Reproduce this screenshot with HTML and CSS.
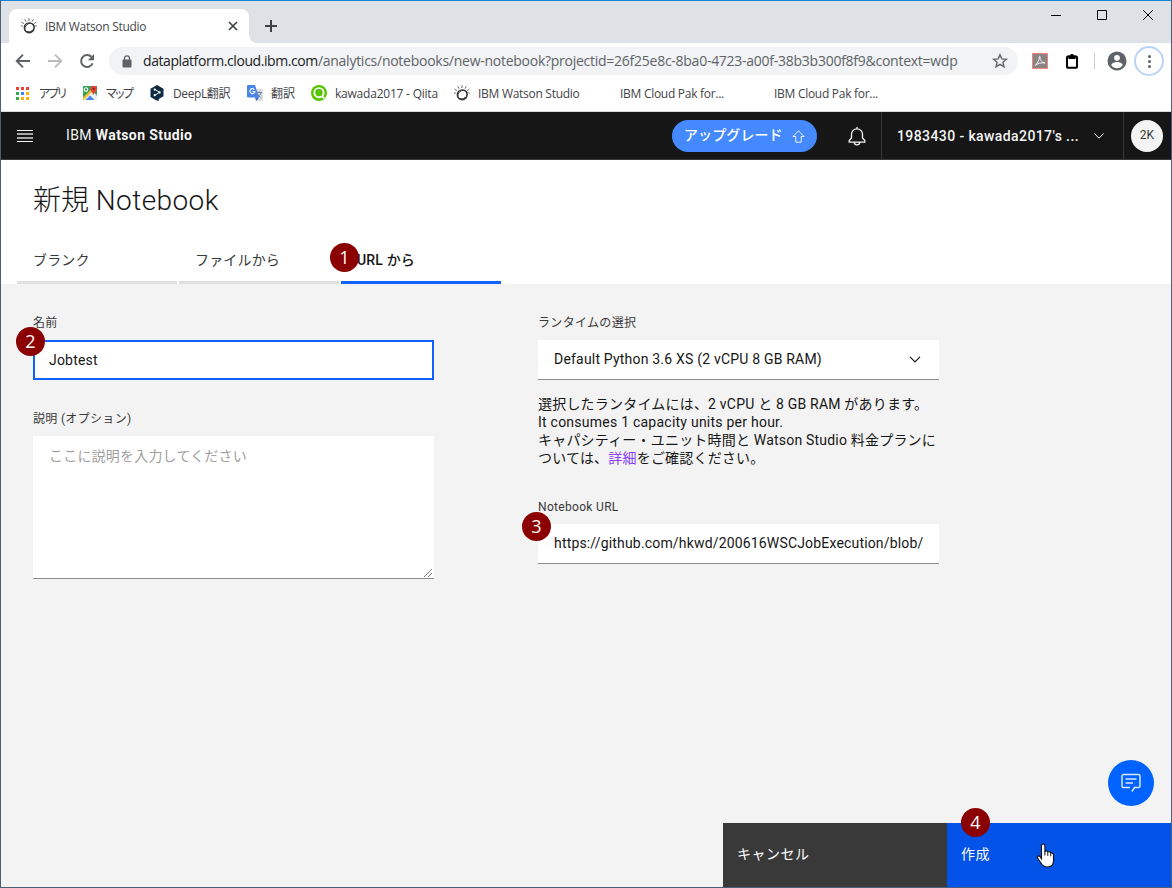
FILE: index.html
```html
<!DOCTYPE html>
<html lang="ja">
<head>
<meta charset="utf-8">
<title>IBM Watson Studio</title>
<link rel="stylesheet" href="styles.css">
</head>
<body>
<svg class="defs" width="0" height="0">
  <symbol id="watson" viewBox="0 0 16 16">
    <g fill="none" stroke="#333" stroke-linecap="round">
      <circle cx="8.2" cy="9.8" r="5" stroke-width="1.2"/>
      <ellipse cx="8.6" cy="9.6" rx="5" ry="4" transform="rotate(-40 8.6 9.6)" stroke-width=".9"/>
      <path d="M5 13.6q4 2 6.8-1" stroke-width="1"/>
      <path d="M8 .7v1.800M3.900 1.700l.9 1.600M12.100 1.700l-.9 1.600M1 4.400l1.600 1M15 4.400l-1.600 1M.4 8h1M15.400 8h-.8" stroke-width="1" stroke="#666"/>
    </g>
  </symbol>
</svg>
<div class="window">
  <div class="tabstrip">
    <div class="tab">
      <svg class="favicon" width="16" height="16"><use href="#watson"/></svg>
      <span class="tab-title">IBM Watson Studio</span>
      <svg class="tab-close" width="10" height="10" viewBox="0 0 10 10"><path d="M1 1l8 8M9 1l-8 8" stroke="#3c4043" stroke-width="1.6"/></svg>
    </div>
    <svg class="tab-foot" width="8" height="8" viewBox="0 0 8 8"><path d="M0 0a8 8 0 0 0 8 8H0z" fill="#fff"/></svg>
    <svg class="new-tab" width="14" height="14" viewBox="0 0 14 14"><path d="M7 1v12M1 7h12" stroke="#3c4043" stroke-width="2"/></svg>
    <div class="window-controls">
      <svg width="12" height="12" viewBox="0 0 12 12"><path d="M1 6.5h10" stroke="#000"/></svg>
      <svg width="12" height="12" viewBox="0 0 12 12"><path d="M1.5 1.5h9v9h-9z" fill="none" stroke="#000"/></svg>
      <svg width="12" height="12" viewBox="0 0 12 12"><path d="M1 1l10 10M11 1L1 11" stroke="#000"/></svg>
    </div>
  </div>

  <div class="toolbar">
    <svg class="nav" width="16" height="16" viewBox="0 0 16 16"><path d="M15 8H2M8 1.7L1.7 8 8 14.3" fill="none" stroke="#5f6368" stroke-width="1.9"/></svg>
    <svg class="nav" width="16" height="16" viewBox="0 0 16 16"><path d="M1 8h13M8 1.7L14.3 8 8 14.3" fill="none" stroke="#babcbe" stroke-width="1.9"/></svg>
    <svg class="nav" width="16" height="16" viewBox="0 0 16 16"><path d="M13.6 10.4A6 6 0 1 1 12.4 3.8" fill="none" stroke="#5f6368" stroke-width="2"/><path d="M15 1v6.2H8.8z" fill="#5f6368"/></svg>
    <div class="omnibox">
      <svg width="10" height="13" viewBox="0 0 10 13"><rect x=".5" y="4.5" width="9" height="8" rx="1" fill="#5f6368"/><path d="M2.500 5V3.300a2.500 2.500 0 0 1 5 0V5" fill="none" stroke="#5f6368" stroke-width="1.300"/></svg>
      <span class="url"><b>dataplatform.cloud.ibm.com</b>/analytics/notebooks/new-notebook?projectid=26f25e8c-8ba0-4723-a00f-38b3b300f8f9&amp;context=wdp</span>
      <svg class="star" width="16" height="16" viewBox="0 0 16 16"><path d="M8 1.700l1.800 4.200 4.600.4-3.500 3 1.100 4.500L8 11.400l-4 2.400 1.100-4.500-3.500-3 4.600-.4z" fill="none" stroke="#5f6368" stroke-width="1.400"/></svg>
    </div>
    <svg class="ext-pdf" width="16" height="16" viewBox="0 0 16 16"><rect x=".5" y=".5" width="15" height="15" fill="#8b8486" stroke="#ef8777"/><path d="M3.200 12.400C5.300 10.800 7 7.800 7.300 4c0-1.200 1.200-1 .8.600C7.700 7 10.200 9.600 13 10M3.200 12.400c2.400-1.900 6-3.100 9.800-2.400" fill="none" stroke="#f6f2f2" stroke-width="1"/></svg>
    <svg class="ext-clip" width="14" height="16" viewBox="0 0 14 16"><rect x="2" y="3.500" width="10" height="11.300" rx=".8" fill="none" stroke="#000" stroke-width="2"/><path d="M3.500 2.500h1.600a2 2 0 0 1 3.800 0h1.600V6h-7z"/></svg>
    <span class="separator"></span>
    <svg class="avatar" width="20" height="20" viewBox="0 0 20 20"><circle cx="10" cy="10" r="9.500" fill="#5f6368"/><circle cx="10" cy="6.800" r="2.900" fill="#fff"/><path d="M4.300 14.300c0-2.200 3.800-3.300 5.700-3.300s5.700 1.100 5.700 3.300a7 7 0 0 1-11.400 0z" fill="#fff"/></svg>
    <span class="kebab"><i></i><i></i><i></i></span>
  </div>

  <div class="bookmarks">
    <span class="bm bm-apps"><span class="apps-grid"><i class="r"></i><i class="r"></i><i class="r"></i><i class="g"></i><i class="b"></i><i class="y"></i><i class="g"></i><i class="y"></i><i class="y"></i></span><em>アプリ</em></span>
    <span class="bm bm-maps">
      <svg width="16" height="16" viewBox="0 0 16 16"><path d="M1 1h14v14H1z" fill="#34a058"/><path d="M1 15L10.500 6 15 10.500V15z" fill="#eceff1"/><path d="M3.500 15L8 10.500l4.500 4.500z" fill="#4285f4"/><path d="M1 12.500l9.500-9.300 1.500 1.500L2 15H1z" fill="#fbc02d"/><circle cx="4" cy="4.600" r="1.800" fill="none" stroke="#fff" stroke-width="1.100"/><path d="M11.500 10.500c-.2-2.600-3-3.600-3-6.700a3.100 3.100 0 0 1 6.200 0c0 3.100-3 4.100-3.200 6.700z" fill="#ea4335"/><circle cx="11.600" cy="3.800" r="1.100" fill="#8b1a10"/></svg><em>マップ</em></span>
    <span class="bm bm-deepl">
      <svg width="14" height="16" viewBox="0 0 14 16"><path d="M7 0l6.500 3.700v7.500L8.800 14v2L6 15.200.5 12V3.700z" fill="#0f2b46"/><path d="M5 4.500L9.500 7.300 5 10.200" fill="none" stroke="#fff" stroke-width=".9"/><circle cx="4.700" cy="4.600" r="1.100" fill="#fff"/><circle cx="9.600" cy="7.400" r="1.100" fill="#fff"/><circle cx="4.700" cy="10.200" r="1.100" fill="#fff"/></svg><em>DeepL翻訳</em></span>
    <span class="bm bm-trans">
      <svg width="16" height="16" viewBox="0 0 16 16"><path d="M6 4h9a1 1 0 0 1 1 1v10a1 1 0 0 1-1 1H9z" fill="#dcdcdc"/><path d="M9.500 7.500H15M12.200 6.500v1M14 7.500c-.6 2.300-2 3.800-4 5M10.600 9c.8 1.700 2 2.800 3.600 3.600" stroke="#607d8b" fill="none" stroke-width=".9"/><path d="M1 0h7l4 12.500H1a1 1 0 0 1-1-1V1a1 1 0 0 1 1-1z" fill="#4a86e8"/><path d="M8 12.500h4L9.200 16z" fill="#3367d6"/><path d="M7.300 4.500a2.500 2.500 0 1 0 .6 2H5.600" fill="none" stroke="#fff" stroke-width="1.100"/></svg><em>翻訳</em></span>
    <span class="bm bm-qiita">
      <svg width="16" height="16" viewBox="0 0 16 16"><circle cx="8" cy="8" r="8" fill="#55c500"/><circle cx="8" cy="7.700" r="4.600" fill="none" stroke="#fff" stroke-width="1.900"/><ellipse cx="7.800" cy="6.700" rx="3.300" ry="2.600" fill="#55c500"/><path d="M11 11.500l2.300 1.800" stroke="#fff" stroke-width="1.900"/></svg><em>kawada2017 - Qiita</em></span>
    <span class="bm bm-watson"><svg width="16" height="16"><use href="#watson"/></svg><em>IBM Watson Studio</em></span>
    <span class="bm bm-cloud1"><em>IBM Cloud Pak for...</em></span>
    <span class="bm bm-cloud2"><em>IBM Cloud Pak for...</em></span>
  </div>

  <header class="app-header">
    <svg class="menu" width="16" height="12" viewBox="0 0 16 12"><path d="M0 .5h16M0 11.500h16" stroke="#f4f4f4"/><path d="M0 4h16M0 8h16" stroke="#a8a8a8" stroke-width="2"/></svg>
    <span class="brand">IBM <b>Watson Studio</b></span>
    <button class="upgrade"><span>アップグレード</span><svg width="13" height="13" viewBox="0 0 13 13"><path d="M6.500.8L12 6.500H9.200v5.700H3.800V6.500H1z" fill="none" stroke="#fff" stroke-width=".9"/></svg></button>
    <svg class="bell" width="18" height="20" viewBox="0 0 18 20"><path d="M9 1v1.800M3.500 8.300a5.500 5.500 0 0 1 11 0V12l2.300 2.500v1.700H1.200v-1.700L3.500 12zM6.300 16.500a2.700 2.300 0 0 0 5.400 0" fill="none" stroke="#f4f4f4" stroke-width="1.300"/></svg>
    <div class="account"><span>1983430 - kawada2017's ...</span><svg width="10" height="6" viewBox="0 0 10 6"><path d="M.4.500L5 5.200 9.600.5" fill="none" stroke="#f4f4f4"/></svg></div>
    <div class="user"><span>2K</span></div>
  </header>

  <section class="page-head">
    <h1>新規 <span>Notebook</span></h1>
    <nav class="tabs">
      <a>ブランク</a>
      <a>ファイルから</a>
      <a class="active"><span>URL から</span><span class="step step-1">1</span></a>
    </nav>
  </section>

  <main class="content">
    <div class="form">
      <div class="column">
        <label>名前</label>
        <div class="field focused"><span class="value t-name">Jobtest</span><span class="step step-2">2</span></div>
        <label class="label-desc">説明 (オプション)</label>
        <div class="textarea">ここに説明を入力してください
          <svg class="grip" width="10" height="10" viewBox="0 0 10 10"><path d="M1 9L9 1M5 9l4-4" stroke="#555" stroke-dasharray="1.100 .4"/></svg>
        </div>
      </div>
      <div class="column">
        <label>ランタイムの選択</label>
        <div class="field"><span class="value">Default Python 3.6 XS (2 vCPU 8 GB RAM)</span><svg class="chevron" width="12" height="7" viewBox="0 0 12 7"><path d="M1 .8l5 5 5-5" fill="none" stroke="#161616" stroke-width="1.200"/></svg></div>
        <p class="help"><span class="l1">選択したランタイムには、2 vCPU と 8 GB RAM があります。</span><span class="en">It consumes 1 capacity units per hour.</span><span>キャパシティー・ユニット時間と Watson Studio 料金プランに</span><span>ついては、<a>詳細</a>をご確認ください。</span></p>
        <label class="label-url">Notebook URL</label>
        <div class="field"><span class="value t-url">https://github.com/hkwd/200616WSCJobExecution/blob/</span><span class="step step-3">3</span></div>
      </div>
    </div>
    <div class="chat"><svg width="20" height="20" viewBox="0 0 20 20"><path d="M9 14.500H2.500A1.500 1.500 0 0 1 1 13V3a1.500 1.500 0 0 1 1.500-1.500h15A1.500 1.500 0 0 1 19 3v10a1.500 1.500 0 0 1-1.500 1.500h-4l-2.600 4M4.500 6h11M4.500 10H12" fill="none" stroke="#d9e7ff" stroke-width="1.500"/></svg></div>
    <footer class="actions">
      <button class="cancel">キャンセル</button>
      <button class="create">作成<span class="step step-4">4</span>
        <svg class="cursor" width="19" height="26" viewBox="0 0 19 26"><path d="M5.500 15.800V2.700a1.700 1.700 0 0 1 3.400 0v5.800c.8-.8 2.500-.6 2.900.6 1-.7 2.500-.3 2.900.9 1.400-.4 2.800.4 2.800 2v5.500c0 4-2 6.500-6 6.500-3.500 0-5-1.300-6.500-4L1.500 15c-.8-1.800 1.400-2.800 2.500-1.300z" fill="#fff" stroke="#111" stroke-width="1.100"/><path d="M8.900 8.500v4M11.800 9.300v3.500M14.700 10.300v3" stroke="#111"/></svg>
      </button>
    </footer>
  </main>
</div>
</body>
</html>
```
FILE: styles.css
```css
* { box-sizing: border-box; }
body { margin: 0; font-family: Roboto, "Noto Sans CJK JP", sans-serif; color: #161616; white-space: nowrap; }
svg { display: block; flex: none; }
button { border: 0; padding: 0; font: inherit; color: #fff; text-align: left; }
.defs { position: absolute; }

.window { width: 1172px; height: 888px; display: flex; flex-direction: column; border: 1px solid #4a6076; border-top-color: #1883d7; background: #fff; overflow: hidden; }

/* browser chrome */
.tabstrip { height: 42px; flex: none; display: flex; background: #dee1e6; padding: 8px 0 0 8px; }
.tab { width: 240px; height: 34px; display: flex; align-items: center; background: #fff; border-radius: 8px 8px 0 0; padding: 0 11px 0 12px; font: 12px "Open Sans", sans-serif; color: #45494d; }
.tab-title { margin-left: 8px; letter-spacing: -.3px; }
.tab-close { margin-left: auto; }
.tab-foot { align-self: flex-end; }
.new-tab { margin: 10px 0 0 7px; }
.window-controls { margin-left: auto; margin-right: 17px; display: flex; gap: 34px; }
.toolbar { height: 37px; flex: none; display: flex; align-items: center; padding: 0 0 1px 14px; }
.nav { margin-right: 16px; }
.omnibox { width: 909px; height: 28px; margin-left: -2px; border-radius: 14px; background: #f1f3f4; display: flex; align-items: center; padding: 0 10px 0 13px; }
.url { margin-left: 11px; font: 14px/20px "Open Sans", sans-serif; color: #5f6368; letter-spacing: -.26px; }
.url b { font-weight: 400; color: #202124; letter-spacing: -.42px; }
.star { margin-left: auto; }
.ext-pdf { margin-left: 14px; }
.ext-clip { margin-left: 17px; }
.separator { width: 1px; height: 16px; margin-left: 15px; background: #c8cacd; }
.avatar { margin-left: 12px; }
.kebab { width: 30px; height: 30px; margin-left: 7px; border: 2px solid #bad3f8; border-radius: 50%; display: flex; flex-direction: column; align-items: center; justify-content: center; gap: 2px; }
.kebab i { width: 3px; height: 3px; border-radius: 50%; background: #5f6368; }
.bookmarks { height: 32px; flex: none; display: flex; padding: 0 0 5px 14px; border-bottom: 1px solid #d9dbdd; font: 12px "Open Sans", "Noto Sans CJK JP", sans-serif; color: #3f4347; }
.bm { display: flex; align-items: center; flex: none; gap: 8px; letter-spacing: -.28px; }
.bm em { font-style: normal; line-height: 18px; padding-top: 2px; }
.bm-apps { width: 67px; gap: 10px; }
.bm-apps em, .bm-maps em { font-feature-settings: "palt"; letter-spacing: -2px; }
.apps-grid { width: 13px; display: grid; grid-template-columns: repeat(3, 3px); gap: 2px; margin-left: 1px; }
.apps-grid i { height: 3px; }
.r { background: #ea4335; } .g { background: #34a853; } .b { background: #4285f4; } .y { background: #fbb105; }
.bm-maps { width: 68px; }
.bm-maps em { letter-spacing: -1.6px; }
.bm-deepl { width: 97px; gap: 9px; letter-spacing: -.4px; }
.bm-trans { width: 64px; letter-spacing: 0; }
.bm-qiita { width: 143px; letter-spacing: -.22px; }
.bm-watson { width: 166px; }
.bm-cloud1 { width: 154px; }

/* application header */
.app-header { height: 48px; flex: none; display: flex; align-items: center; background: #161616; border-bottom: 1px solid #393939; color: #f4f4f4; font-size: 14px; }
.menu { margin-left: 16px; }
.brand { margin-left: 33px; letter-spacing: .4px; padding-bottom: 1px; }
.brand b { font-weight: 700; }
.upgrade { width: 145px; height: 32px; margin-left: auto; border-radius: 16px; background: #4589ff; display: flex; align-items: center; padding: 0 12px 4px 12px; font-weight: 500; }
.upgrade span { letter-spacing: .1px; }
.upgrade svg { margin: 5px 0 0 auto; }
.bell { margin: 0 15px 0 31px; }
.account { width: 243px; height: 47px; border-left: 1px solid #393939; border-right: 1px solid #393939; display: flex; align-items: center; justify-content: space-between; padding: 0 19px 0 15px; font-weight: 500; letter-spacing: .4px; }
.user { width: 32px; height: 32px; margin: 0 8px 0 7px; border-radius: 50%; background: #f4f4f4; color: #393939; display: flex; justify-content: center; line-height: 31px; font-size: 12px; }

/* title and tabs */
.page-head { height: 124px; flex: none; padding-left: 16px; display: flex; flex-direction: column; justify-content: space-between; }
h1 { margin: 23px 0 0 16px; font-weight: 300; font-size: 28px; line-height: 36px; }
h1 span { letter-spacing: .4px; }
.tabs { display: flex; gap: 2px; }
.tabs a { width: 160px; height: 48px; border-bottom: 3px solid #e0e0e0; padding-left: 16px; font-size: 14px; line-height: 48px; letter-spacing: .16px; color: #393939; position: relative; }
.tabs .active { border-color: #0f62fe; font-weight: 500; color: #161616; }

/* form */
.content { flex: 1; background: #f3f3f3; display: flex; flex-direction: column; position: relative; }
.form { display: grid; grid-template-columns: 401px 401px; gap: 104px; padding: 31px 0 0 32px; }
.column { display: flex; flex-direction: column; }
label { font-size: 12px; line-height: 16px; letter-spacing: .32px; color: #393939; margin-bottom: 9px; }
.field { height: 40px; background: #fff; border-bottom: 1px solid #8d8d8d; display: flex; align-items: center; padding: 0 16px; font-size: 14px; position: relative; }
.focused { border: 2px solid #0f62fe; padding: 0 14px; }
.value { letter-spacing: .2px; padding-bottom: 1px; }
.t-url { letter-spacing: .17px; }
.chevron { margin: 0 2px 0 auto; }
.label-desc { margin-top: 31px; }
.textarea { height: 143px; background: #fff; border-bottom: 1px solid #8d8d8d; padding: 10px 16px; font-size: 14px; line-height: 20px; letter-spacing: .2px; color: #a0a0a0; position: relative; }
.grip { position: absolute; right: 1px; bottom: 0; }
.help { margin: 15px 0 0; font-size: 14px; line-height: 18px; display: flex; flex-direction: column; letter-spacing: .2px; }
.help .l1 { letter-spacing: .2px; }
.help .en { letter-spacing: .24px; }
.help a { color: #8a3ffc; }
.label-url { margin: 32px 0 9px; }

/* numbered callouts */
.step { position: absolute; width: 29px; height: 29px; border-radius: 50%; background: #8b0000; color: #fff; font: 18px/28px "Open Sans", sans-serif; text-align: center; letter-spacing: 0; }
.step-1 { left: -11px; top: 7px; }
.step-2 { left: -19px; top: -15px; }
.step-3 { left: -16px; top: -12px; }
.step-4 { left: 14px; top: -15px; }

.chat { position: absolute; right: 17px; bottom: 81px; width: 46px; height: 46px; border-radius: 50%; background: #0062ff; display: flex; align-items: center; justify-content: center; }
.actions { margin-top: auto; display: flex; justify-content: flex-end; }
.actions button { width: 224px; height: 64px; padding: 0 0 4px 14px; font-size: 14px; letter-spacing: .5px; position: relative; }
.cancel { background: #393939; }
.create { background: #0353e9; }
.cursor { position: absolute; left: 89px; top: 20px; }
```
